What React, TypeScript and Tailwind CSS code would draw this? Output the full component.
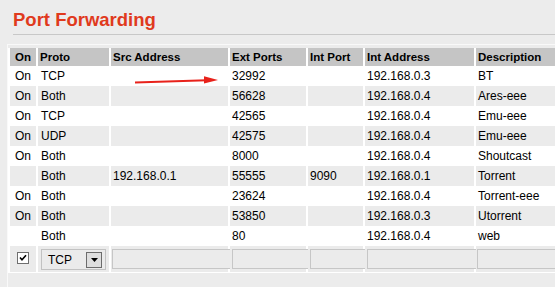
import React from "react";

const rows = [
  ["On", "TCP", "", "32992", "", "192.168.0.3", "BT"],
  ["On", "Both", "", "56628", "", "192.168.0.4", "Ares-eee"],
  ["On", "TCP", "", "42565", "", "192.168.0.4", "Emu-eee"],
  ["On", "UDP", "", "42575", "", "192.168.0.4", "Emu-eee"],
  ["On", "Both", "", "8000", "", "192.168.0.4", "Shoutcast"],
  ["", "Both", "192.168.0.1", "55555", "9090", "192.168.0.1", "Torrent"],
  ["On", "Both", "", "23624", "", "192.168.0.4", "Torrent-eee"],
  ["On", "Both", "", "53850", "", "192.168.0.3", "Utorrent"],
  ["", "Both", "", "80", "", "192.168.0.4", "web"],
];

const headers = ["On", "Proto", "Src Address", "Ext Ports", "Int Port", "Int Address", "Description"];

function Cell({ text, idx, gray }: { text: string; idx: number; gray: boolean }) {
  return (
    <td
      className={
        "h-[20px] p-0 text-[12px] leading-[20px] text-black whitespace-nowrap overflow-hidden " +
        (idx === 0 ? "text-center " : idx === 1 ? "pl-[3px] " : "pl-[2px] ") +
        (gray ? "bg-[#ebebeb]" : "bg-white")
      }
    >
      {text}
    </td>
  );
}

// input field in the "add new" row
function Field({ w }: { w: string }) {
  return (
    <input
      readOnly
      defaultValue=""
      className={"block h-[20px] border border-[#c6c6c6] bg-[#ebebeb] outline-none " + w}
    />
  );
}

export default function App() {
  return (
    <div className="relative w-[555px] h-[287px] overflow-hidden bg-[#ececec] font-['Liberation_Sans',Arial,sans-serif]">
      <h1 className="ml-[13px] h-[31px] pt-[9px] text-[18.5px] leading-[22px] font-bold text-[#e03a1d]">
        Port Forwarding
      </h1>
      <div className="ml-[13px] mt-[3px] h-px bg-[#c8c8c8]" />

      <div className="ml-[7px] mt-[9px] h-full border-l border-t border-[#f9f9f9] pt-[3px]">
        <div className="w-fit bg-white pb-px">
          <table className="w-[590px] table-fixed border-separate border-spacing-x-[2px] border-spacing-y-0 bg-white">
            <colgroup>
              <col className="w-[26px]" />
              <col className="w-[71px]" />
              <col className="w-[117px]" />
              <col className="w-[76px]" />
              <col className="w-[55px]" />
              <col className="w-[109px]" />
              <col className="w-[120px]" />
            </colgroup>
            <thead>
              <tr>
                {headers.map((h, i) => (
                  <th
                    key={h}
                    className={
                      "h-[18px] p-0 bg-[#c5c5c5] text-[11.5px] leading-[18px] font-bold text-black whitespace-nowrap overflow-hidden " +
                      (i === 0 ? "text-center" : "pl-[2px] text-left")
                    }
                  >
                    {h}
                  </th>
                ))}
              </tr>
            </thead>
            <tbody>
              {rows.map((r, ri) => (
                <tr key={ri}>
                  {r.map((c, ci) => (
                    <Cell key={ci} text={c} idx={ci} gray={ri % 2 === 1} />
                  ))}
                </tr>
              ))}
              <tr>
                <td className="h-[26px] p-0 bg-[#ebebeb] align-top">
                  <div className="mx-auto mt-[6px] flex h-[12px] w-[12px] items-center justify-center border border-[#6f6f6f] bg-white">
                    <svg width="8" height="8" viewBox="0 0 8 8">
                      <path d="M1 3.5 L3 5.8 L7 1.2" fill="none" stroke="#000" strokeWidth="1.6" />
                    </svg>
                  </div>
                </td>
                <td className="h-[26px] p-0 bg-[#ebebeb] align-top">
                  <div className="ml-[3px] mt-[3px] flex h-[21px] w-[65px] items-center border border-[#c2c2c2] bg-[#ebebeb] pl-[6px] pr-[3px] text-[12px] text-black">
                    <span className="flex-1">TCP</span>
                    <span className="flex h-[16px] w-[16px] items-center justify-center border border-[#6c6c6c] bg-[#dedede]">
                      <svg width="7" height="4" viewBox="0 0 7 4">
                        <path d="M0 0 H7 L3.5 4 Z" fill="#000" />
                      </svg>
                    </span>
                  </div>
                </td>
                <td className="h-[26px] p-0 bg-[#ebebeb] align-middle">
                  <div className="ml-[1px]">
                    <Field w="w-[119px]" />
                  </div>
                </td>
                <td className="h-[26px] p-0 bg-[#ebebeb] align-middle">
                  <div className="ml-[2px]">
                    <Field w="w-[78px]" />
                  </div>
                </td>
                <td className="h-[26px] p-0 bg-[#ebebeb] align-middle">
                  <div className="ml-[2px]">
                    <Field w="w-[57px]" />
                  </div>
                </td>
                <td className="h-[26px] p-0 bg-[#ebebeb] align-middle">
                  <div className="ml-[2px]">
                    <Field w="w-[110px]" />
                  </div>
                </td>
                <td className="h-[26px] p-0 bg-[#ebebeb] align-middle">
                  <div className="ml-[1px]">
                    <Field w="w-[120px]" />
                  </div>
                </td>
              </tr>
            </tbody>
          </table>
        </div>
      </div>

      {/* red annotation arrow */}
      <svg className="pointer-events-none absolute left-0 top-0" width="555" height="287">
        <line x1="135" y1="82.5" x2="207" y2="80.2" stroke="#e8221b" strokeWidth="2" />
        <polygon points="204,76.3 218,79.9 204,83.6" fill="#e8221b" />
      </svg>
    </div>
  );
}
